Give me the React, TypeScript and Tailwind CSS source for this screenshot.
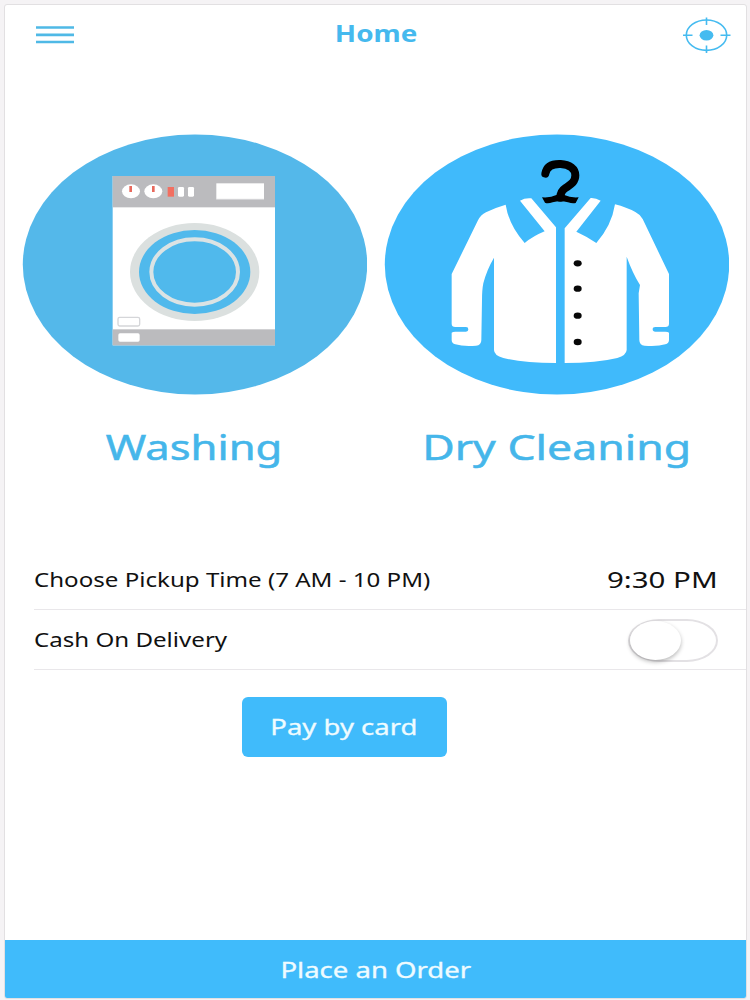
import type { ReactNode } from "react";

function MenuIcon() {
  return (
    <svg className="block h-[20px] w-[39px]" viewBox="0 0 39 20" stroke="#4fb9e6" strokeWidth="2.7">
      <path d="M0 2.5H38M0 9.8H38M0 17H38" />
    </svg>
  );
}

function TargetIcon() {
  return (
    <svg className="block h-[36px] w-[48px]" viewBox="683 17 48 36" fill="none" stroke="#45bbf0" strokeWidth="1.6">
      <ellipse cx="706.5" cy="35.2" rx="20.2" ry="15.2" />
      <path d="M706.5 17.5V25M706.5 45.5V53M683 35.2H692.5M720.5 35.2H730.5" />
      <ellipse cx="706.5" cy="35.2" rx="6.9" ry="5.3" fill="#45bbf0" stroke="none" />
    </svg>
  );
}

function WashingArt() {
  return (
    <svg className="block h-[261px] w-[345px]" viewBox="22 134 345 261">
      <ellipse cx="195" cy="264.5" rx="172.2" ry="130" fill="#54b8ea" />
      <g transform="translate(100 165) scale(0.33333)">
        <rect x="38" y="33" width="487" height="508" fill="#fff" />
        <rect x="38" y="33" width="487" height="94" fill="#bbbbbe" />
        <rect x="38" y="493" width="487" height="48" fill="#bbbbbe" />
        <ellipse cx="93" cy="79" rx="27" ry="21" fill="#fff" />
        <ellipse cx="160" cy="79" rx="27" ry="21" fill="#fff" />
        <path d="M92 63V81M160 63V81" stroke="#e8695c" strokeWidth="8" />
        <rect x="203" y="66" width="19" height="29" fill="#f26f61" />
        <rect x="234" y="66" width="18" height="29" rx="4" fill="#fff" />
        <rect x="264" y="66" width="18" height="29" rx="4" fill="#fff" />
        <rect x="349" y="55" width="143" height="48" fill="#fff" />
        <path d="M349 103H492" stroke="#d4d4d6" strokeWidth="3" />
        <ellipse cx="284" cy="321" rx="194" ry="147" fill="#dbe0df" />
        <ellipse cx="284" cy="321" rx="167" ry="126" fill="#50b9ec" />
        <ellipse cx="284" cy="321" rx="130" ry="98" fill="none" stroke="#dbe3e4" strokeWidth="12" />
        <rect x="54" y="457" width="65" height="26" rx="5" fill="#fff" stroke="#d5d6d9" strokeWidth="4" />
        <rect x="55" y="505" width="64" height="25" rx="5" fill="#fff" />
      </g>
    </svg>
  );
}

function JacketArt() {
  return (
    <svg className="block h-[261px] w-[345px]" viewBox="384 134 345 261">
      <ellipse cx="557" cy="264.5" rx="172.2" ry="130" fill="#40bafb" />
      <g transform="translate(440 150) scale(0.33333)">
        <g fill="#fff">
          <path d="M240 152Q255 143 274 145L348 232V639Q250 639 190 624Q162 616 162 600V323Q140 360 130 400Q126 420 126 450L124 570Q124 586 108 587Q70 590 46 583Q35 580 35 570V548Q38 545 46 545H78Q85 545 85 538Q85 531 78 531H46Q35 531 35 521V372L114 211Q122 195 138 187Q165 173 197 164Q207 227 254 279Q280 258 314 244Z" />
          <path d="M482 152Q467 143 452 144L374 235V639Q470 639 532 624Q559 616 560 600V320Q578 370 600 405L596 430L598 570Q598 586 614 587Q652 590 676 583Q687 580 687 570V548Q684 545 676 545H646Q638 545 638 538Q638 531 646 531H676Q687 531 687 521V372L608 207Q600 193 586 186Q560 172 525 163Q515 227 469 279Q442 260 409 245Z" />
        </g>
        <path d="M316 71C320 48 338 41 362 42C389 43 406 57 406 76C406 98 389 105 375 115Q361 124 361 143" fill="none" stroke="#000" strokeWidth="24" strokeLinecap="round" />
        <path d="M306 142Q332 144 349 135H373Q391 144 416 142L407 159Q398 162 384 157Q361 150 338 157Q323 162 315 158Z" fill="#000" />
        <g fill="#080808">
          <ellipse cx="413" cy="340" rx="12" ry="9.5" />
          <ellipse cx="413" cy="416" rx="12" ry="9.5" />
          <ellipse cx="413" cy="497" rx="12" ry="9.5" />
          <ellipse cx="413" cy="576" rx="12" ry="9.5" />
        </g>
      </g>
    </svg>
  );
}

function Service({ art, children }: { art: ReactNode; children: ReactNode }) {
  return (
    <button className="flex w-[345px] flex-col items-center text-[34px] leading-[46px] text-[#45b6ea] [-webkit-text-stroke:0.5px_#45b6ea]">
      {art}
      <span className="mt-[29px]">{children}</span>
    </button>
  );
}

export default function App() {
  return (
    <div className="h-[1000px] w-[750px] overflow-hidden bg-[#f5f3f5] pt-1 pl-1 font-['Noto_Sans',sans-serif] whitespace-nowrap">
      <main className="flex h-[995px] w-[743px] flex-col overflow-hidden rounded-[3px] border border-[#e2e0e2] bg-white">
        <header className="grid h-[60px] grid-cols-3 items-center pr-[15px] pl-[31px]">
          <button aria-label="Menu" className="w-fit">
            <MenuIcon />
          </button>
          <h1 className="pr-[15px] pb-[3px] text-center text-[23px] font-bold text-[#45b9ee]">
            <span className="inline-block scale-x-[1.21]">Home</span>
          </h1>
          <button aria-label="Locate" className="w-fit justify-self-end">
            <TargetIcon />
          </button>
        </header>

        <section className="mt-[69px] flex gap-[17px] pl-[17px]">
          <Service art={<WashingArt />}>
            <span className="inline-block scale-x-[1.28]">Washing</span>
          </Service>
          <Service art={<JacketArt />}>
            <span className="inline-block scale-x-[1.31]">Dry Cleaning</span>
          </Service>
        </section>

        <section className="mt-[80px] ml-[29px] text-[20px] text-[#111]">
          <div className="flex h-[60px] items-center justify-between border-b border-[#e9e7ea] pr-[28px]">
            <span className="origin-left scale-x-[1.205]">Choose Pickup Time (7 AM - 10 PM)</span>
            <span className="origin-right scale-x-[1.34] text-[22px]">9:30 PM</span>
          </div>
          <div className="flex h-[60px] items-center justify-between border-b border-[#e9e7ea] pr-[28px]">
            <span className="origin-left scale-x-[1.205]">Cash On Delivery</span>
            <button
              role="switch"
              aria-checked={false}
              aria-label="Cash On Delivery"
              className="mt-[2px] h-[43px] w-[90px] rounded-[32px/22px] border-2 border-[#e3e1e4] bg-white"
            >
              <span className="block h-[39px] w-[51px] rounded-[50%] bg-white shadow-[0_2px_4px_rgba(0,0,0,0.28)]" />
            </button>
          </div>
        </section>

        <button className="mt-[27px] ml-[237px] h-[60px] w-[205px] rounded-[6px] bg-[#40bbfb] pr-[2px] pb-[2px] text-[22px] text-[#effbff] [-webkit-text-stroke:0.3px_#effbff]">
          <span className="inline-block scale-x-[1.25]">Pay by card</span>
        </button>

        <button className="mt-auto h-[58px] shrink-0 bg-[#40bbfb] pt-[3px] text-[21px] text-[#effbff] [-webkit-text-stroke:0.3px_#effbff]">
          <span className="inline-block scale-x-[1.31]">Place an Order</span>
        </button>
      </main>
    </div>
  );
}
